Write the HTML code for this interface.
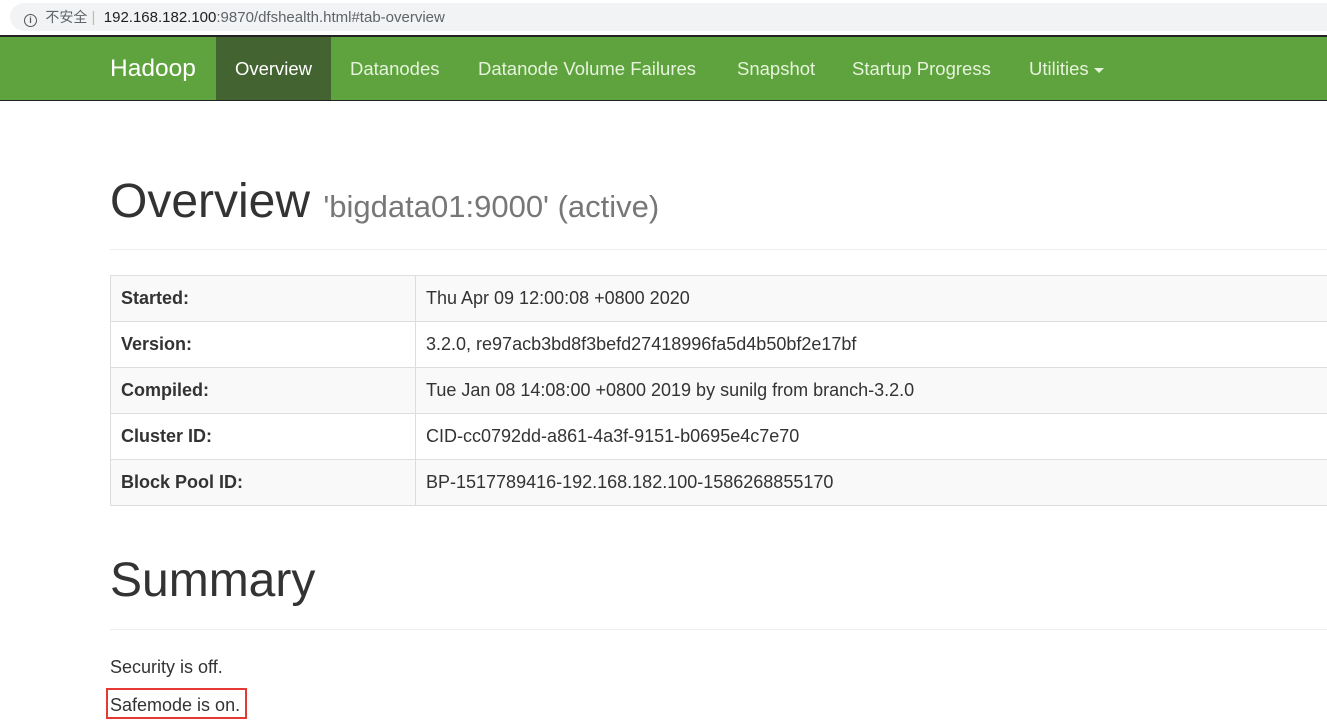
<!DOCTYPE html>
<html><head><meta charset="utf-8"><style>
*{margin:0;padding:0;box-sizing:border-box}
body{width:1327px;height:724px;overflow:hidden;background:#fff;font-family:"Liberation Sans","Noto Sans CJK SC",sans-serif;color:#333;position:relative}
.addr{position:absolute;left:0;top:0;width:1327px;height:35px;background:#fff}
.pill{position:absolute;left:10px;top:3px;width:1330px;height:28px;border-radius:14px;background:#f1f3f4;font-size:15px;line-height:28px;color:#202124;padding-left:14px}
.pill .i{display:inline-block;width:13px;height:13px;border:1.5px solid #555;border-radius:50%;font-size:9px;line-height:10px;text-align:center;font-weight:bold;vertical-align:-1px;color:#555}
.nav{position:absolute;left:0;top:35px;width:1327px;height:66px;background:#5fa33e;border-top:2px solid #222;border-bottom:1px solid #222}
.nav span{position:absolute;top:0;height:63px;line-height:63px;color:#e6f3dc;font-size:18.5px}
.abs{position:absolute}
table{position:absolute;left:110px;top:275px;width:1240px;border-collapse:collapse;font-size:18px}
td{border:1px solid #ddd;height:46px;padding:0 10px}
tr:nth-child(odd) td{background:#f9f9f9}
td:first-child{width:305px;font-weight:bold}
hr{position:absolute;left:110px;width:1220px;border:0;border-top:1px solid #eee}
</style></head><body>
<div class="addr"><div class="pill"><span class="i">i</span>&nbsp; <span style="color:#5f6368;font-size:14px">不安全</span> <span style="color:#bbb">|</span>&nbsp; 192.168.182.100<span style="color:#5f6368">:9870/dfshealth.html#tab-overview</span></div></div>
<div class="nav">
<span style="left:110px;font-size:24.5px;color:#fff">Hadoop</span>
<span style="left:216px;width:115px;background:#436331;color:#fff;text-align:center">Overview</span>
<span style="left:350px">Datanodes</span>
<span style="left:478px">Datanode Volume Failures</span>
<span style="left:737px">Snapshot</span>
<span style="left:852px">Startup Progress</span>
<span style="left:1029px">Utilities <span style="position:relative;display:inline-block;width:0;height:0;border-left:5px solid transparent;border-right:5px solid transparent;border-top:5px solid #e6f3dc;vertical-align:middle;top:auto;line-height:0;height:0"></span></span>
</div>
<div class="abs" style="left:110px;top:174px;font-size:48px;line-height:56px">Overview <span style="font-size:31px;color:#777">'bigdata01:9000' (active)</span></div>
<hr style="top:249px">
<table>
<tr><td>Started:</td><td>Thu Apr 09 12:00:08 +0800 2020</td></tr>
<tr><td>Version:</td><td>3.2.0, re97acb3bd8f3befd27418996fa5d4b50bf2e17bf</td></tr>
<tr><td>Compiled:</td><td>Tue Jan 08 14:08:00 +0800 2019 by sunilg from branch-3.2.0</td></tr>
<tr><td>Cluster ID:</td><td>CID-cc0792dd-a861-4a3f-9151-b0695e4c7e70</td></tr>
<tr><td>Block Pool ID:</td><td>BP-1517789416-192.168.182.100-1586268855170</td></tr>
</table>
<div class="abs" style="left:110px;top:553px;font-size:48px;line-height:56px">Summary</div>
<hr style="top:629px">
<div class="abs" style="left:110px;top:656px;font-size:18px;line-height:22px">Security is off.</div>
<div class="abs" style="left:106px;top:688px;width:141px;height:31px;border:2px solid #e53935"></div>
<div class="abs" style="left:110px;top:694px;font-size:18px;line-height:22px">Safemode is on.</div>
</body></html>
